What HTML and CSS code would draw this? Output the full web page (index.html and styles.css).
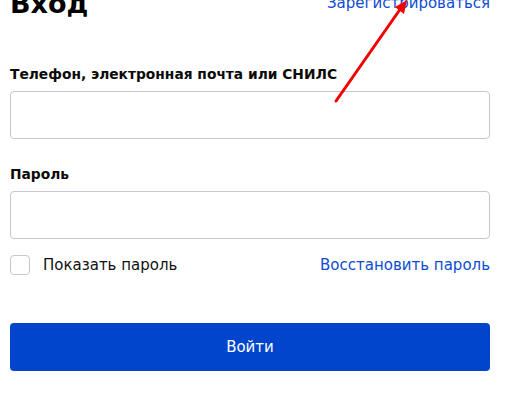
FILE: index.html
```html
<!DOCTYPE html>
<html lang="ru">
<head>
<meta charset="utf-8">
<link rel="stylesheet" href="styles.css">
</head>
<body>
<div class="page">
  <div class="header">
    <h1 class="title">Вход</h1>
    <a class="link register" href="#">Зарегистрироваться</a>
  </div>
  <form class="form">
    <label class="label first">Телефон, электронная почта или СНИЛС</label>
    <input class="input" type="text">
    <label class="label">Пароль</label>
    <input class="input" type="password">
    <div class="row">
      <label class="check">
        <span class="box"></span>
        <span class="check-text">Показать пароль</span>
      </label>
      <a class="link restore" href="#">Восстановить пароль</a>
    </div>
    <button class="btn" type="button">Войти</button>
  </form>
  <svg class="arrow" width="506" height="400" viewBox="0 0 506 400">
    <line x1="336" y1="117" x2="401" y2="24" stroke="#f20000" stroke-width="3" stroke-linecap="round"/>
    <polygon points="407,16 395,23 404,30" fill="#f20000"/>
  </svg>
</div>
</body>
</html>
```

FILE: styles.css
```css
* { box-sizing: border-box; }
html, body { margin: 0; padding: 0; background: #fff; overflow: hidden; }
body { font-family: "DejaVu Sans", Verdana, sans-serif; color: #111; }
.page { position: relative; width: 506px; height: 400px; padding: 0 16px 0 10px; }
.header { display: flex; justify-content: space-between; align-items: flex-start; margin-top: -16px; }
.title { margin: 0; font-size: 27px; line-height: 40px; font-weight: 700; color: #000; }
.link { color: #0d4cd3; text-decoration: none; font-size: 15px; line-height: 20px; }
.register { margin-top: 9px; }
.form { display: flex; flex-direction: column; }
.label { font-size: 13.8px; line-height: 20px; font-weight: 700; margin: 25px 0 7px; color: #0a0a0a; }
.label.first { margin-top: 40px; }
.input { height: 48px; width: 100%; border: 1px solid #c6c6d0; border-radius: 4px; background: #fff; outline: none; }
.row { display: flex; justify-content: space-between; align-items: center; margin-top: 16px; height: 20px; }
.check { display: flex; align-items: center; }
.box { width: 20px; height: 20px; border: 1px solid #c6c6d0; border-radius: 4px; }
.check-text { margin-left: 13px; font-size: 15px; line-height: 20px; color: #111; }
.btn { margin-top: 48px; height: 48px; width: 100%; border: 0; border-radius: 4px; background: #0045cc; color: #fff; font-family: "DejaVu Sans", Verdana, sans-serif; font-size: 15px; }
.arrow { position: absolute; left: 0; top: 0; pointer-events: none; }
```
